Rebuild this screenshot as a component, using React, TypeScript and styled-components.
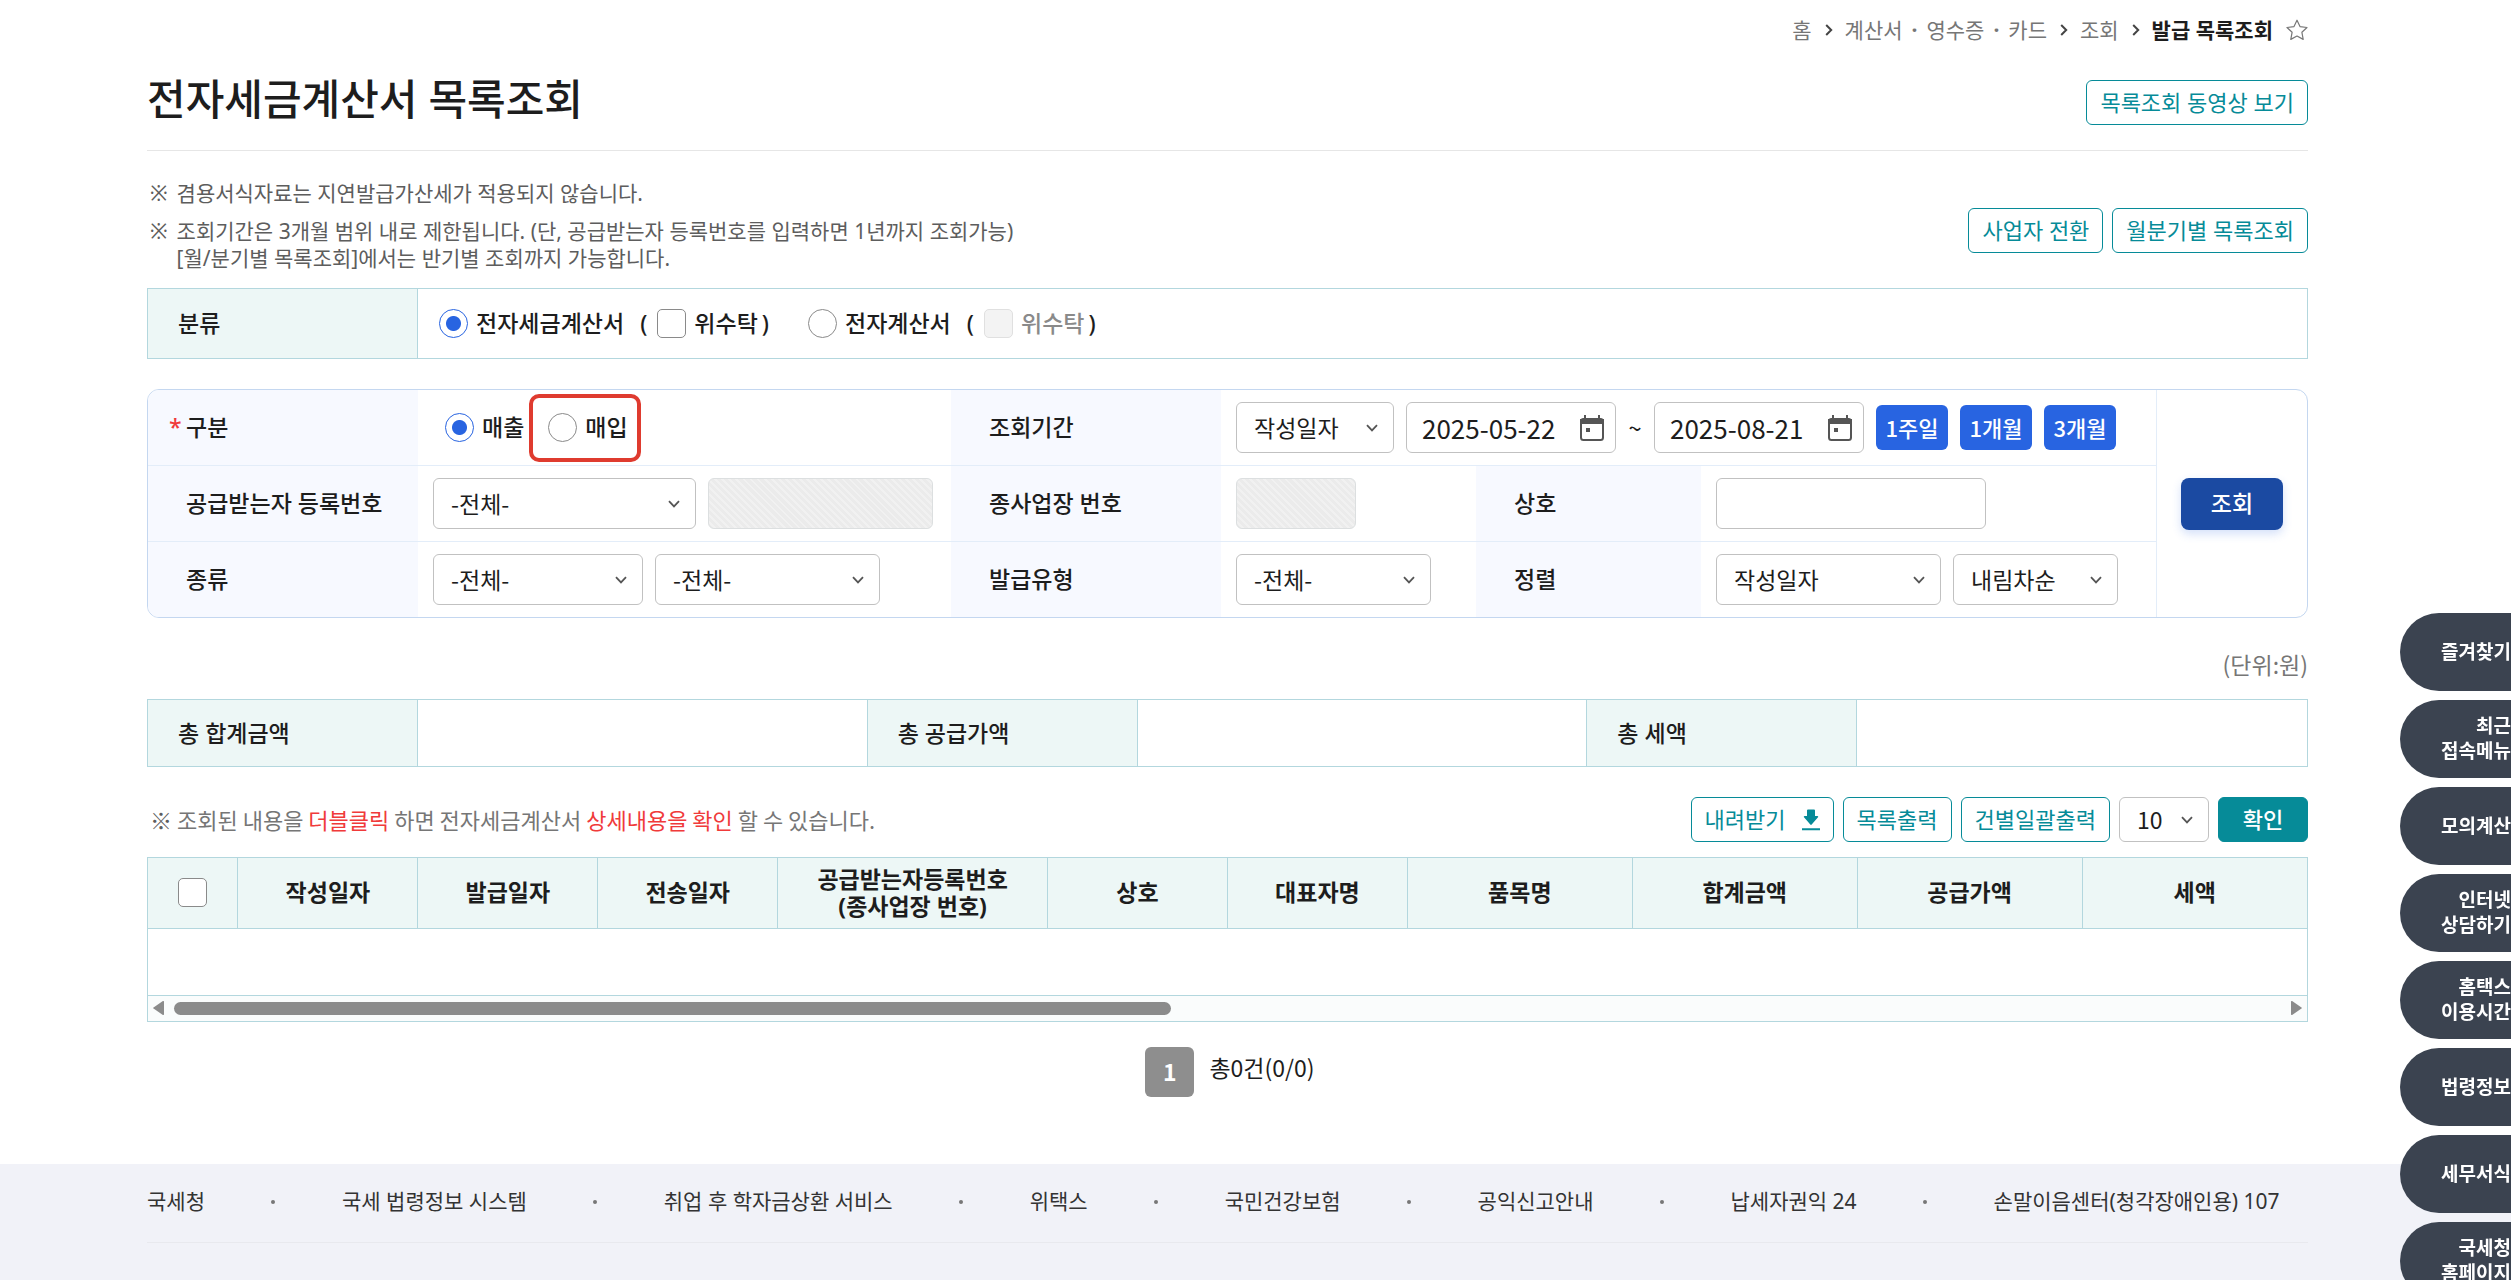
import React, { useState } from "react";
import styled, { createGlobalStyle, css } from "styled-components";

const color = {
  text: "#1d1d1d",
  sub: "#5d5d5d",
  muted: "#767676",
  teal: "#068b98",
  tealLine: "#b3d7de",
  tealBg: "#edf7f6",
  blue: "#2864e1",
  navy: "#1b4aa2",
  panelLine: "#c4d7f0",
  panelRow: "#e3edf9",
  panelBg: "#f7f9ff",
  field: "#c1c1c1",
  red: "#f03a3a",
};

const font = {
  control: '"Noto Sans CJK KR", "Noto Sans", sans-serif',
  copy: '"Noto Sans", "Noto Sans CJK KR", sans-serif',
};

const GlobalStyle = createGlobalStyle`
  *, *::before, *::after { box-sizing: border-box; }
  body {
    margin: 0;
    background: #fff;
    color: ${color.text};
    font-family: ${font.control};
    font-size: 23px;
    line-height: 27px;
  }
  button, input, select { font: inherit; color: inherit; margin: 0; }
  button { cursor: pointer; }
  a { color: inherit; text-decoration: none; }
  h1, p, ul, ol, dl, dd, dt, fieldset { margin: 0; padding: 0; border: 0; }
  ul, ol { list-style: none; }
`;

const Main = styled.main`
  padding: 0 203px 0 147px;
`;

/* ---------- heading ---------- */
const Crumbs = styled.ol`
  display: flex;
  justify-content: flex-end;
  align-items: center;
  gap: 12px;
  height: 60px;
  font-family: ${font.copy};
  font-size: 21px;
  color: ${color.muted};
`;
const Crumb = styled.li<{ $current?: boolean }>`
  display: flex;
  align-items: center;
  gap: 13px;
  ${(p) => p.$current && css`color: ${color.text}; font-weight: 700;`}
`;
const Dot = styled.b`
  margin: 0 9px;
`;
const StarButton = styled.button`
  display: flex;
  padding: 0;
  border: 0;
  background: none;
`;
const TitleRow = styled.header`
  display: flex;
  justify-content: space-between;
  align-items: center;
  height: 91px;
  padding-bottom: 6px;
  border-bottom: 1px solid #e6e6e6;
`;
const Title = styled.h1`
  padding-bottom: 6px;
  font-family: ${font.copy};
  font-size: 42px;
  line-height: 60px;
  font-weight: 500;
`;
const Button = styled.button<{ $solid?: boolean }>`
  display: inline-flex;
  align-items: center;
  justify-content: center;
  gap: 16px;
  height: 45px;
  padding: 0 13px;
  border: 1px solid ${color.teal};
  border-radius: 6px;
  background: ${(p) => (p.$solid ? color.teal : "#fff")};
  color: ${(p) => (p.$solid ? "#fff" : color.teal)};
  font-size: 22px;
  font-family: ${font.copy};
  white-space: nowrap;
  ${(p) => p.$solid && css`min-width: 90px; font-weight: 500;`}
`;
const Buttons = styled.div`
  display: flex;
  gap: 9px;
`;

/* ---------- notes ---------- */
const NoteRow = styled.div`
  display: flex;
  justify-content: space-between;
  align-items: flex-end;
  padding: 29px 0 16px;
`;
const Notes = styled.ul`
  display: grid;
  gap: 11px;
`;
const Note = styled.li`
  display: flex;
  gap: 9px;
  padding-left: 3px;
  font-family: ${font.copy};
  font-size: 21px;
  color: ${color.sub};
`;
const ListNote = styled.p`
  display: flex;
  gap: 5px;
  padding-left: 3px;
  font-size: 22px;
  color: ${color.muted};
`;
const Mark = styled.span`
  color: ${color.sub};
`;
const Em = styled.em`
  font-style: normal;
  color: ${color.red};
`;
const NoteButtons = styled(Buttons)`
  padding-bottom: 19px;
`;

/* ---------- controls ---------- */
const Option = styled.label<{ $off?: boolean }>`
  display: inline-flex;
  align-items: center;
  gap: 8px;
  white-space: nowrap;
  color: ${(p) => (p.$off ? "#8a8a8a" : "inherit")};
`;
const Radio = styled.input.attrs({ type: "radio" })`
  appearance: none;
  width: 29px;
  height: 29px;
  border: 1px solid #8a8a8a;
  border-radius: 50%;
  background: #fff;
  &:checked {
    border-color: ${color.blue};
    background: radial-gradient(circle, ${color.blue} 7px, #fff 8px);
  }
`;
const Check = styled.input.attrs({ type: "checkbox" })`
  appearance: none;
  display: block;
  width: 29px;
  height: 29px;
  border: 1px solid #8a8a8a;
  border-radius: 5px;
  background: #fff;
  &:disabled {
    border-color: #e0e0e0;
    background: #f3f3f3;
  }
`;
const Highlight = styled.span`
  display: flex;
  align-items: center;
  height: 68px;
  padding: 0 9px 0 15px;
  border: 4px solid #df3b2f;
  border-radius: 10px;
`;
const SelectBox = styled.span<{ $w: number; $h?: number }>`
  display: inline-grid;
  align-items: center;
  width: ${(p) => p.$w}px;
  height: ${(p) => p.$h ?? 51}px;
  > * { grid-area: 1 / 1; }
  > svg { justify-self: end; margin-right: 16px; pointer-events: none; }
`;
const NativeSelect = styled.select`
  appearance: none;
  width: 100%;
  height: 100%;
  padding: 0 34px 0 17px;
  border: 1px solid ${color.field};
  border-radius: 6px;
  background: #fff;
`;
const Field = styled.input<{ $w: number }>`
  width: ${(p) => p.$w}px;
  height: 51px;
  padding: 0 14px;
  border: 1px solid ${color.field};
  border-radius: 6px;
  background: #fff;
  &:disabled {
    border-color: #dcdfe0;
    background: repeating-linear-gradient(45deg, #ebebeb 0 3px, #f1f1f1 3px 5px);
  }
`;
const DateBox = styled.span`
  display: inline-flex;
  align-items: center;
  width: 210px;
  height: 51px;
  padding: 0 10px 0 15px;
  border: 1px solid ${color.field};
  border-radius: 6px;
  background: #fff;
`;
const DateInput = styled.input`
  flex: 1;
  min-width: 0;
  padding: 0;
  border: 0;
  background: none;
  font-size: 26px;
`;
const Tilde = styled.span`
  width: 14px;
  text-align: center;
  font-weight: 500;
`;
const IconButton = styled.button`
  display: flex;
  padding: 0;
  border: 0;
  background: none;
`;
const RangeButton = styled.button`
  height: 45px;
  width: 72px;
  padding: 0;
  border: 0;
  border-radius: 6px;
  background: ${color.blue};
  color: #fff;
  font-size: 22px;
  font-weight: 500;
`;

/* ---------- classification ---------- */
const ClassRow = styled.fieldset`
  display: flex;
  min-width: 0;
  border: 1px solid ${color.tealLine};
  font-family: ${font.copy};
`;
const ClassHead = styled.div`
  display: flex;
  align-items: center;
  flex: 0 0 270px;
  height: 69px;
  padding-left: 30px;
  border-right: 1px solid ${color.tealLine};
  background: ${color.tealBg};
  font-weight: 500;
`;
const ClassBody = styled.div`
  display: flex;
  align-items: center;
  gap: 39px;
  padding-left: 21px;
  font-weight: 500;
`;
const ClassGroup = styled.div`
  display: flex;
  align-items: center;
  gap: 16px;
`;
const Paren = styled.span`
  display: flex;
  align-items: center;
  gap: 4px;
  ${Option} { margin-left: 6px; }
`;

/* ---------- search panel ---------- */
const Panel = styled.form`
  display: flex;
  margin-top: 30px;
  border: 1px solid ${color.panelLine};
  border-radius: 12px;
  overflow: hidden;
`;
const PanelRows = styled.div`
  flex: 1;
  min-width: 0;
`;
const PanelRow = styled.div`
  display: grid;
  grid-template-columns: 270px minmax(0, 533fr) 270px minmax(0, 255fr) 225px minmax(0, 455fr);
  height: 76px;
  border-bottom: 1px solid ${color.panelRow};
  &:last-child { height: 75px; border-bottom: 0; }
`;
const Head = styled.div`
  display: flex;
  align-items: center;
  padding-left: 38px;
  background: ${color.panelBg};
  font-family: ${font.copy};
  font-weight: 500;
`;
const Required = styled.span`
  width: 17px;
  margin-left: -17px;
  color: ${color.red};
`;
const Cell = styled.div<{ $span?: number }>`
  display: flex;
  align-items: center;
  gap: 12px;
  padding-left: 15px;
  ${(p) => p.$span && css`grid-column: span ${p.$span};`}
`;
const KindCell = styled(Cell)`
  gap: 5px;
  padding-left: 27px;
  font-family: ${font.copy};
  font-weight: 500;
`;
const SubmitCell = styled.div`
  display: flex;
  align-items: center;
  justify-content: center;
  flex: 0 0 151px;
  border-left: 1px solid ${color.panelRow};
`;
const Submit = styled.button`
  width: 102px;
  height: 52px;
  border: 0;
  border-radius: 8px;
  background: ${color.navy};
  box-shadow: 0 4px 10px rgba(40, 100, 225, 0.2);
  color: #fff;
  font-family: ${font.copy};
  font-weight: 500;
`;

/* ---------- totals ---------- */
const Unit = styled.p`
  padding: 33px 0 21px;
  text-align: right;
  color: ${color.muted};
`;
const Totals = styled.dl`
  display: grid;
  grid-template-columns: repeat(3, 270fr 450fr);
  height: 68px;
  border: 1px solid ${color.tealLine};
`;
const TotalHead = styled.dt`
  display: flex;
  align-items: center;
  padding-left: 30px;
  border-right: 1px solid ${color.tealLine};
  background: ${color.tealBg};
  font-family: ${font.copy};
  font-weight: 500;
`;
const TotalValue = styled.dd`
  border-right: 1px solid ${color.tealLine};
  &:last-child { border-right: 0; }
`;

/* ---------- result grid ---------- */
const ListBar = styled.div`
  display: flex;
  justify-content: space-between;
  align-items: center;
  padding: 30px 0 15px;
`;
const GridFrame = styled.div`
  border: 1px solid ${color.tealLine};
`;
const Grid = styled.table`
  width: 100%;
  table-layout: fixed;
  border-collapse: collapse;
`;
const Col = styled.col<{ $w: number }>`
  width: ${(p) => (p.$w / 2160) * 100}%;
`;
const Th = styled.th`
  height: 70px;
  padding: 0;
  border-right: 1px solid ${color.tealLine};
  border-bottom: 1px solid ${color.tealLine};
  background: ${color.tealBg};
  font-family: ${font.copy};
  font-weight: 700;
  &:last-child { border-right: 0; }
  input { margin: 0 auto; }
`;
const Empty = styled.td`
  height: 67px;
  padding: 0;
  border-bottom: 1px solid ${color.tealLine};
`;
const ScrollBar = styled.div`
  display: flex;
  align-items: center;
  gap: 10px;
  height: 25px;
  padding: 0 5px;
  background: #fafcfc;
`;
const Track = styled.div`
  flex: 1;
`;
const Thumb = styled.div`
  width: 47.3%;
  height: 13px;
  border-radius: 7px;
  background: #8b8b8b;
`;
const Pager = styled.nav`
  display: flex;
  justify-content: center;
  gap: 15px;
  padding: 25px 0 67px 5px;
`;
const PageButton = styled.button`
  width: 49px;
  height: 50px;
  padding: 0;
  border: 0;
  border-radius: 6px;
  background: #8e8e8e;
  color: #fff;
  font-weight: 700;
`;
const PageInfo = styled.span`
  line-height: 40px;
`;

/* ---------- footer ---------- */
const Footer = styled.footer`
  min-height: 117px;
  padding: 0 203px 0 147px;
  background: #f1f2f8;
`;
const FooterLinks = styled.ul`
  display: flex;
  align-items: center;
  height: 79px;
  padding-bottom: 2px;
  border-bottom: 1px solid #e8e9ee;
  font-family: ${font.copy};
  font-size: 21px;
  color: #333;
  white-space: nowrap;
`;
const FooterItem = styled.li`
  display: flex;
  align-items: center;
  & + &::before {
    content: "";
    width: 4px;
    height: 4px;
    margin: 0 67px 0 66px;
    border-radius: 50%;
    background: #777;
  }
`;

/* ---------- quick menu ---------- */
const Quick = styled.aside`
  position: fixed;
  top: 613px;
  right: 0;
  display: grid;
  gap: 9px;
`;
const QuickButton = styled.button`
  width: 111px;
  height: 78px;
  padding: 0 0 0 40px;
  border: 0;
  border-radius: 39px 0 0 39px;
  background: #3b4350;
  color: #fff;
  font-family: ${font.copy};
  font-size: 19px;
  line-height: 25px;
  font-weight: 700;
  text-align: right;
  white-space: pre;
`;

const Chevron = () => (
  <svg width="12" height="8" viewBox="0 0 12 8" fill="none" stroke="#555" strokeWidth="1.8">
    <path d="M1 1.2 6 6.4 11 1.2" />
  </svg>
);
const CrumbArrow = () => (
  <svg width="8" height="12" viewBox="0 0 8 12" fill="none" stroke="#444" strokeWidth="2">
    <path d="M1.2 1 6.2 6 1.2 11" />
  </svg>
);
const Calendar = () => (
  <svg width="26" height="28" viewBox="0 0 26 28" fill="none">
    <path d="M6 1v5M20 1v5" stroke="#555" strokeWidth="2" />
    <rect x="2" y="5" width="22" height="21" rx="2.5" stroke="#555" strokeWidth="2" />
    <path d="M1 5h24v5H1z" fill="#555" />
    <rect x="7" y="14" width="4" height="4" fill="#555" />
  </svg>
);
const Star = () => (
  <svg width="22" height="22" viewBox="0 0 22 22" fill="none" stroke="#777" strokeWidth="1.2" strokeLinejoin="round">
    <path d="M11 1.2 14 7.6 21 8.5 15.9 13.3 17.2 20.4 11 17 4.8 20.4 6.1 13.3 1 8.5 8 7.6z" />
  </svg>
);
const Download = () => (
  <svg width="18" height="22" viewBox="0 0 18 22" fill={color.teal}>
    <path d="M5 1.5a1 1 0 0 1 1-1h6a1 1 0 0 1 1 1V7h2.5a.7.7 0 0 1 .5 1.200L9.700 15.600a1 1 0 0 1-1.400 0L2 8.200A.7.7 0 0 1 2.500 7H5zM0 19.200h18v2H0z" />
  </svg>
);
const Triangle = ({ left }: { left?: boolean }) => (
  <svg width="11" height="14" viewBox="0 0 11 14" fill="#8b8b8b">
    <path
      d={
        left
          ? "M11 1v12a1 1 0 0 1-1.500.8L.5 7.600a.8.8 0 0 1 0-1.200L9.500.2A1 1 0 0 1 11 1z"
          : "M0 1v12a1 1 0 0 0 1.500.8l9-6.200a.8.8 0 0 0 0-1.200L1.500.2A1 1 0 0 0 0 1z"
      }
    />
  </svg>
);

function Select({ label, value, w, h }: { label: string; value: string; w: number; h?: number }) {
  return (
    <SelectBox $w={w} $h={h}>
      <NativeSelect aria-label={label} defaultValue={value}>
        <option>{value}</option>
      </NativeSelect>
      <Chevron />
    </SelectBox>
  );
}

function DateField({ label, value }: { label: string; value: string }) {
  return (
    <DateBox>
      <DateInput aria-label={label} defaultValue={value} />
      <IconButton type="button" aria-label="달력">
        <Calendar />
      </IconButton>
    </DateBox>
  );
}

const columns: { label: React.ReactNode; w: number }[] = [
  { label: "작성일자", w: 180 },
  { label: "발급일자", w: 180 },
  { label: "전송일자", w: 180 },
  { label: <>공급받는자등록번호<br />(종사업장 번호)</>, w: 270 },
  { label: "상호", w: 180 },
  { label: "대표자명", w: 180 },
  { label: "품목명", w: 225 },
  { label: "합계금액", w: 225 },
  { label: "공급가액", w: 225 },
  { label: "세액", w: 225 },
];

const footerLinks = [
  "국세청",
  "국세 법령정보 시스템",
  "취업 후 학자금상환 서비스",
  "위택스",
  "국민건강보험",
  "공익신고안내",
  "납세자권익 24",
  "손말이음센터(청각장애인용) 107",
];

const quickMenu = [
  "즐겨찾기",
  "최근\n접속메뉴",
  "모의계산",
  "인터넷\n상담하기",
  "홈택스\n이용시간",
  "법령정보",
  "세무서식",
  "국세청\n홈페이지",
];

export default function App() {
  const [docType, setDocType] = useState("tax");
  const [kind, setKind] = useState("sale");

  return (
    <>
      <GlobalStyle />
      <Main>
        <nav>
          <Crumbs>
            <Crumb>
              <a href="#">홈</a>
              <CrumbArrow />
            </Crumb>
            <Crumb>
              <a href="#">
                계산서<Dot>·</Dot>영수증<Dot>·</Dot>카드
              </a>
              <CrumbArrow />
            </Crumb>
            <Crumb>
              <a href="#">조회</a>
              <CrumbArrow />
            </Crumb>
            <Crumb $current>
              발급 목록조회
              <StarButton aria-label="즐겨찾기 추가">
                <Star />
              </StarButton>
            </Crumb>
          </Crumbs>
        </nav>
        <TitleRow>
          <Title>전자세금계산서 목록조회</Title>
          <Button>목록조회 동영상 보기</Button>
        </TitleRow>

        <NoteRow>
          <Notes>
            <Note>
              <Mark>※</Mark>
              <span>겸용서식자료는 지연발급가산세가 적용되지 않습니다.</span>
            </Note>
            <Note>
              <Mark>※</Mark>
              <span>
                조회기간은 3개월 범위 내로 제한됩니다. (단, 공급받는자 등록번호를 입력하면 1년까지 조회가능)
                <br />
                [월/분기별 목록조회]에서는 반기별 조회까지 가능합니다.
              </span>
            </Note>
          </Notes>
          <NoteButtons>
            <Button>사업자 전환</Button>
            <Button>월분기별 목록조회</Button>
          </NoteButtons>
        </NoteRow>

        <ClassRow aria-label="분류">
          <ClassHead>분류</ClassHead>
          <ClassBody>
            <ClassGroup>
              <Option>
                <Radio name="doc" checked={docType === "tax"} onChange={() => setDocType("tax")} />
                전자세금계산서
              </Option>
              <Paren>
                (
                <Option>
                  <Check />
                  위수탁
                </Option>
                )
              </Paren>
            </ClassGroup>
            <ClassGroup>
              <Option>
                <Radio name="doc" checked={docType === "plain"} onChange={() => setDocType("plain")} />
                전자계산서
              </Option>
              <Paren>
                (
                <Option $off>
                  <Check disabled />
                  위수탁
                </Option>
                )
              </Paren>
            </ClassGroup>
          </ClassBody>
        </ClassRow>

        <Panel onSubmit={(e) => e.preventDefault()}>
          <PanelRows>
            <PanelRow>
              <Head>
                <Required>*</Required>구분
              </Head>
              <KindCell>
                <Option>
                  <Radio name="kind" checked={kind === "sale"} onChange={() => setKind("sale")} />
                  매출
                </Option>
                <Highlight>
                  <Option>
                    <Radio name="kind" checked={kind === "buy"} onChange={() => setKind("buy")} />
                    매입
                  </Option>
                </Highlight>
              </KindCell>
              <Head>조회기간</Head>
              <Cell $span={3}>
                <Select label="조회기간 기준" value="작성일자" w={158} />
                <DateField label="시작일" value="2025-05-22" />
                <Tilde>~</Tilde>
                <DateField label="종료일" value="2025-08-21" />
                <RangeButton type="button">1주일</RangeButton>
                <RangeButton type="button">1개월</RangeButton>
                <RangeButton type="button">3개월</RangeButton>
              </Cell>
            </PanelRow>
            <PanelRow>
              <Head>공급받는자 등록번호</Head>
              <Cell>
                <Select label="공급받는자 등록번호" value="-전체-" w={263} />
                <Field $w={225} disabled aria-label="등록번호" />
              </Cell>
              <Head>종사업장 번호</Head>
              <Cell>
                <Field $w={120} disabled aria-label="종사업장 번호" />
              </Cell>
              <Head>상호</Head>
              <Cell>
                <Field $w={270} aria-label="상호" />
              </Cell>
            </PanelRow>
            <PanelRow>
              <Head>종류</Head>
              <Cell>
                <Select label="종류" value="-전체-" w={210} />
                <Select label="세부 종류" value="-전체-" w={225} />
              </Cell>
              <Head>발급유형</Head>
              <Cell>
                <Select label="발급유형" value="-전체-" w={195} />
              </Cell>
              <Head>정렬</Head>
              <Cell>
                <Select label="정렬 기준" value="작성일자" w={225} />
                <Select label="정렬 순서" value="내림차순" w={165} />
              </Cell>
            </PanelRow>
          </PanelRows>
          <SubmitCell>
            <Submit>조회</Submit>
          </SubmitCell>
        </Panel>

        <Unit>(단위:원)</Unit>
        <Totals>
          <TotalHead>총 합계금액</TotalHead>
          <TotalValue />
          <TotalHead>총 공급가액</TotalHead>
          <TotalValue />
          <TotalHead>총 세액</TotalHead>
          <TotalValue />
        </Totals>

        <ListBar>
          <ListNote>
            <Mark>※</Mark>
            <span>
              조회된 내용을 <Em>더블클릭</Em> 하면 전자세금계산서 <Em>상세내용을 확인</Em> 할 수 있습니다.
            </span>
          </ListNote>
          <Buttons>
            <Button>
              내려받기
              <Download />
            </Button>
            <Button>목록출력</Button>
            <Button>건별일괄출력</Button>
            <Select label="표시 건수" value="10" w={90} h={45} />
            <Button $solid>확인</Button>
          </Buttons>
        </ListBar>

        <GridFrame>
          <Grid>
            <colgroup>
              <Col $w={90} />
              {columns.map((c, i) => (
                <Col key={i} $w={c.w} />
              ))}
            </colgroup>
            <thead>
              <tr>
                <Th>
                  <Check aria-label="전체 선택" />
                </Th>
                {columns.map((c, i) => (
                  <Th key={i}>{c.label}</Th>
                ))}
              </tr>
            </thead>
            <tbody>
              <tr>
                <Empty colSpan={11} />
              </tr>
            </tbody>
          </Grid>
          <ScrollBar>
            <Triangle left />
            <Track>
              <Thumb />
            </Track>
            <Triangle />
          </ScrollBar>
        </GridFrame>

        <Pager>
          <PageButton>1</PageButton>
          <PageInfo>총0건(0/0)</PageInfo>
        </Pager>
      </Main>

      <Footer>
        <FooterLinks>
          {footerLinks.map((name) => (
            <FooterItem key={name}>
              <a href="#">{name}</a>
            </FooterItem>
          ))}
        </FooterLinks>
      </Footer>

      <Quick>
        {quickMenu.map((name) => (
          <QuickButton key={name}>{name}</QuickButton>
        ))}
      </Quick>
    </>
  );
}
